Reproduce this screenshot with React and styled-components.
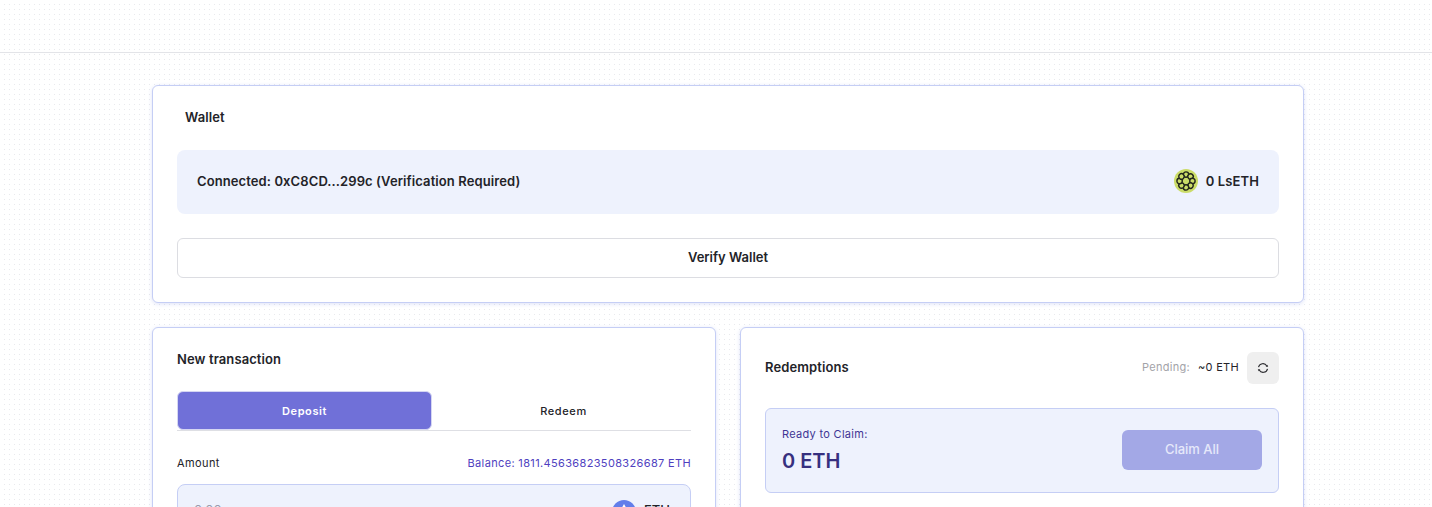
import React from 'react';
import styled, {createGlobalStyle} from 'styled-components';

const GlobalStyle = createGlobalStyle`
    html, body {
        margin: 0;
        height: 507px;
        overflow: hidden;
        font-family: Inter, "Liberation Sans", sans-serif;
        color: #232328;
        background-color: #fff;
        background-image: radial-gradient(circle at 2.5px 2.5px, #e9eaed 0.55px, transparent 0.75px);
        background-size: 5px 5px;
        background-position: 2px 2px;
    }
`;

const LsEthIcon = () => (
    <svg width="24" height="24" viewBox="0 0 24 24">
        <circle cx="12" cy="12" r="12" fill="#cbdc68"/>
        {[0, 45, 90, 135, 180, 225, 270, 315].map(deg => (
            <circle key={deg} cx="12" cy="5.6" r="2.7" fill="#cbdc68" stroke="#23261c" strokeWidth="1.4" transform={`rotate(${deg} 12 12)`}/>
        ))}
    </svg>
);

const RefreshIcon = () => (
    <svg width="12" height="12" viewBox="0 0 12 12" fill="none" stroke="#2a2a2e" strokeWidth="1.1">
        <path d="M1.5 5.2 A4.5 4.5 0 0 1 9.8 3.9"/>
        <path d="M10.5 6.8 A4.5 4.5 0 0 1 2.2 8.1"/>
        <path d="M8.7 4.7 L11.2 4.7 L10.4 2.8 Z" fill="#2a2a2e" stroke="none"/>
        <path d="M3.3 7.3 L0.8 7.3 L1.6 9.2 Z" fill="#2a2a2e" stroke="none"/>
    </svg>
);

const EthIcon = () => (
    <svg width="24" height="24" viewBox="0 0 24 24">
        <circle cx="12" cy="12" r="12" fill="#627eea"/>
        <path d="M12 4 L7.5 12 L12 14.6 L16.5 12 Z" fill="#fff"/>
        <path d="M12 15.6 L7.5 13 L12 20 L16.5 13 Z" fill="#fff" opacity="0.8"/>
    </svg>
);

const App = () => (
    <>
        <GlobalStyle/>
        <Header/>
        <Main>
            <WalletCard>
                <WalletTitle>Wallet</WalletTitle>
                <InfoBox>
                    <span>Connected: 0xC8CD...299c (Verification Required)</span>
                    <TokenBalance><LsEthIcon/>0 LsETH</TokenBalance>
                </InfoBox>
                <VerifyButton>Verify Wallet</VerifyButton>
            </WalletCard>
            <Columns>
                <Card>
                    <CardTitle>New transaction</CardTitle>
                    <Tabs>
                        <Tab $active>Deposit</Tab>
                        <Tab>Redeem</Tab>
                    </Tabs>
                    <AmountRow>
                        <span>Amount</span>
                        <Balance>Balance: 1811.45636823508326687 ETH</Balance>
                    </AmountRow>
                    <AmountInput>
                        <Placeholder>0.00</Placeholder>
                        <Asset><EthIcon/><AssetName>ETH</AssetName></Asset>
                    </AmountInput>
                </Card>
                <RedemptionsCard>
                    <RedemptionsHead>
                        <RedemptionsTitle>Redemptions</RedemptionsTitle>
                        <Pending>
                            <PendingLabel>Pending:</PendingLabel>
                            <PendingValue>~0 ETH</PendingValue>
                            <RefreshButton><RefreshIcon/></RefreshButton>
                        </Pending>
                    </RedemptionsHead>
                    <ClaimBox>
                        <div>
                            <ClaimLabel>Ready to Claim:</ClaimLabel>
                            <ClaimValue>0 ETH</ClaimValue>
                        </div>
                        <ClaimButton>Claim All</ClaimButton>
                    </ClaimBox>
                </RedemptionsCard>
            </Columns>
        </Main>
    </>
);

export default App;

const Header = styled.header`
    height: 52px;
    border-bottom: 1px solid #e3e4e8;
`;

const Main = styled.main`
    width: 1152px;
    margin: 32px 0 0 152px;
    display: flex;
    flex-direction: column;
    gap: 24px;
`;

const Card = styled.section`
    background: #fff;
    border: 1px solid #c5cef5;
    border-radius: 6px;
    box-shadow: 0 1px 4px rgba(90, 110, 220, 0.2);
    padding: 24px;
    box-sizing: border-box;
`;

const WalletCard = styled(Card)`
    height: 218px;
`;

const WalletTitle = styled.h2`
    margin: 0 0 25px 8px;
    font-size: 13px;
    font-weight: 600;
    line-height: 15px;
    letter-spacing: 0.1px;
`;

const InfoBox = styled.div`
    height: 64px;
    padding: 0 20px 2px;
    box-sizing: border-box;
    display: flex;
    align-items: center;
    justify-content: space-between;
    background: #eef2fd;
    border-radius: 8px;
    font-size: 13px;
    font-weight: 600;
    letter-spacing: 0.1px;
`;

const TokenBalance = styled.span`
    display: flex;
    align-items: center;
    gap: 8px;
`;

const VerifyButton = styled.button`
    display: block;
    width: 100%;
    height: 40px;
    margin-top: 24px;
    padding: 0 0 2px;
    background: #fff;
    border: 1px solid #dcdde2;
    border-radius: 6px;
    font: 600 13px Inter, sans-serif;
    color: #232328;
`;

const Columns = styled.div`
    display: grid;
    grid-template-columns: 1fr 1fr;
    gap: 24px;
`;

const CardTitle = styled.h2`
    margin: 0;
    font-size: 13px;
    font-weight: 600;
    line-height: 15px;
    letter-spacing: 0.1px;
`;

const RedemptionsTitle = styled(CardTitle)`
    margin-bottom: 2px;
`;

const Tabs = styled.div`
    display: grid;
    grid-template-columns: 1fr 1fr;
    gap: 4px;
    margin-top: 24px;
    border-bottom: 1px solid #dedfe4;
`;

const Tab = styled.div`
    height: 39px;
    box-sizing: border-box;
    display: flex;
    align-items: center;
    justify-content: center;
    border: 1px solid ${props => (props.$active ? '#d5d6f2' : 'transparent')};
    border-radius: 6px;
    font-size: 11px;
    font-weight: ${props => (props.$active ? 600 : 500)};
    letter-spacing: 0.6px;
    color: ${props => (props.$active ? '#fff' : '#232328')};
    background: ${props => (props.$active ? '#7070d8' : 'transparent')};
`;

const AmountRow = styled.div`
    display: flex;
    justify-content: space-between;
    align-items: center;
    margin-top: 24px;
    font-size: 11px;
    line-height: 16px;
    letter-spacing: 0.4px;
`;

const Balance = styled.span`
    color: #4f3fbf;
    letter-spacing: 0.35px;
`;

const AmountInput = styled.div`
    height: 54px;
    margin-top: 13px;
    padding: 0 20px 0 16px;
    display: flex;
    align-items: center;
    justify-content: space-between;
    background: #eef2fd;
    border: 1px solid #c5cef5;
    border-radius: 8px;
    font-size: 13px;
`;

const Placeholder = styled.span`
    margin-bottom: 4px;
    color: #9a9cae;
`;

const Asset = styled.span`
    display: flex;
    align-items: center;
    gap: 8px;
    font-weight: 500;
`;

const AssetName = styled.span`
    margin-bottom: 4px;
`;

const RedemptionsCard = styled(Card)`
    height: 260px;
`;

const RedemptionsHead = styled.div`
    display: flex;
    align-items: center;
    justify-content: space-between;
`;

const Pending = styled.div`
    display: flex;
    align-items: center;
    font-size: 11px;
    letter-spacing: 0.3px;
`;

const PendingLabel = styled.span`
    margin: 0 8px 2px 0;
    color: #a3a3a8;
`;

const PendingValue = styled.span`
    margin-bottom: 2px;
`;

const RefreshButton = styled.button`
    width: 32px;
    height: 32px;
    margin-left: 8px;
    padding: 0;
    display: flex;
    align-items: center;
    justify-content: center;
    background: #efefef;
    border: 0;
    border-radius: 6px;
`;

const ClaimBox = styled.div`
    height: 85px;
    padding: 0 16px 1px;
    margin-top: 24px;
    box-sizing: border-box;
    display: flex;
    align-items: center;
    justify-content: space-between;
    background: #eef2fd;
    border: 1px solid #c5cef5;
    border-radius: 6px;
`;

const ClaimLabel = styled.div`
    font-size: 11px;
    line-height: 16px;
    letter-spacing: 0.3px;
    color: #3f3594;
`;

const ClaimValue = styled.div`
    margin-top: 5px;
    font-size: 20px;
    font-weight: 600;
    line-height: 28px;
    color: #36307f;
`;

const ClaimButton = styled.button`
    width: 140px;
    height: 40px;
    padding: 0 0 2px;
    background: #a3a8e6;
    border: 0;
    border-radius: 6px;
    font: 500 13px Inter, sans-serif;
    color: #e6e8fa;
`;
